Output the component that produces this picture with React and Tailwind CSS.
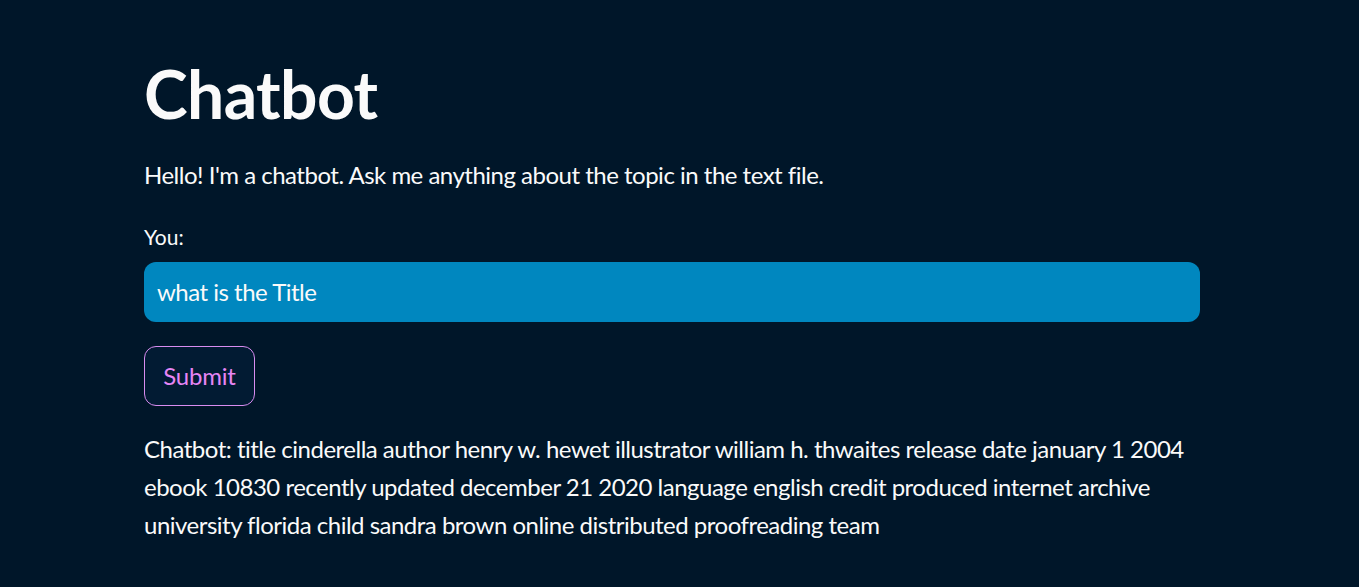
export default function App() {
  const font = { fontFamily: 'Lato, "Noto Sans", sans-serif' };
  return (
    <div className="min-h-[587px] w-full bg-[#001629] text-[#fafafa]" style={font}>
      <div className="w-[1056px] ml-[144px] pt-[54px]">
        <h1 className="text-[66px] font-bold leading-[80px] tracking-[-0.6px]">Chatbot</h1>
        <p className="mt-[22px] text-[24px] leading-[38px] tracking-[-0.5px]">
          Hello! I'm a chatbot. Ask me anything about the topic in the text file.
        </p>
        <label className="block mt-[31px] text-[21px] leading-[24px]">You:</label>
        <div className="mt-[13px] h-[60px] rounded-[12px] bg-[#0087bf] flex items-center px-[13px] text-[24px] tracking-[-0.5px]">
          what is the Title
        </div>
        <button className="mt-[24px] h-[60px] w-[111px] rounded-[12px] border border-[#d88cf0] bg-[#021b33] text-[24px] text-[#e685f5] tracking-[-0.2px]">
          Submit
        </button>
        <p className="mt-[24px] text-[24px] leading-[38px] tracking-[-0.5px]">
          Chatbot: title cinderella author henry w. hewet illustrator william h. thwaites release date january 1 2004 ebook 10830 recently updated december 21 2020 language english credit produced internet archive university florida child sandra brown online distributed proofreading team
        </p>
      </div>
    </div>
  );
}
